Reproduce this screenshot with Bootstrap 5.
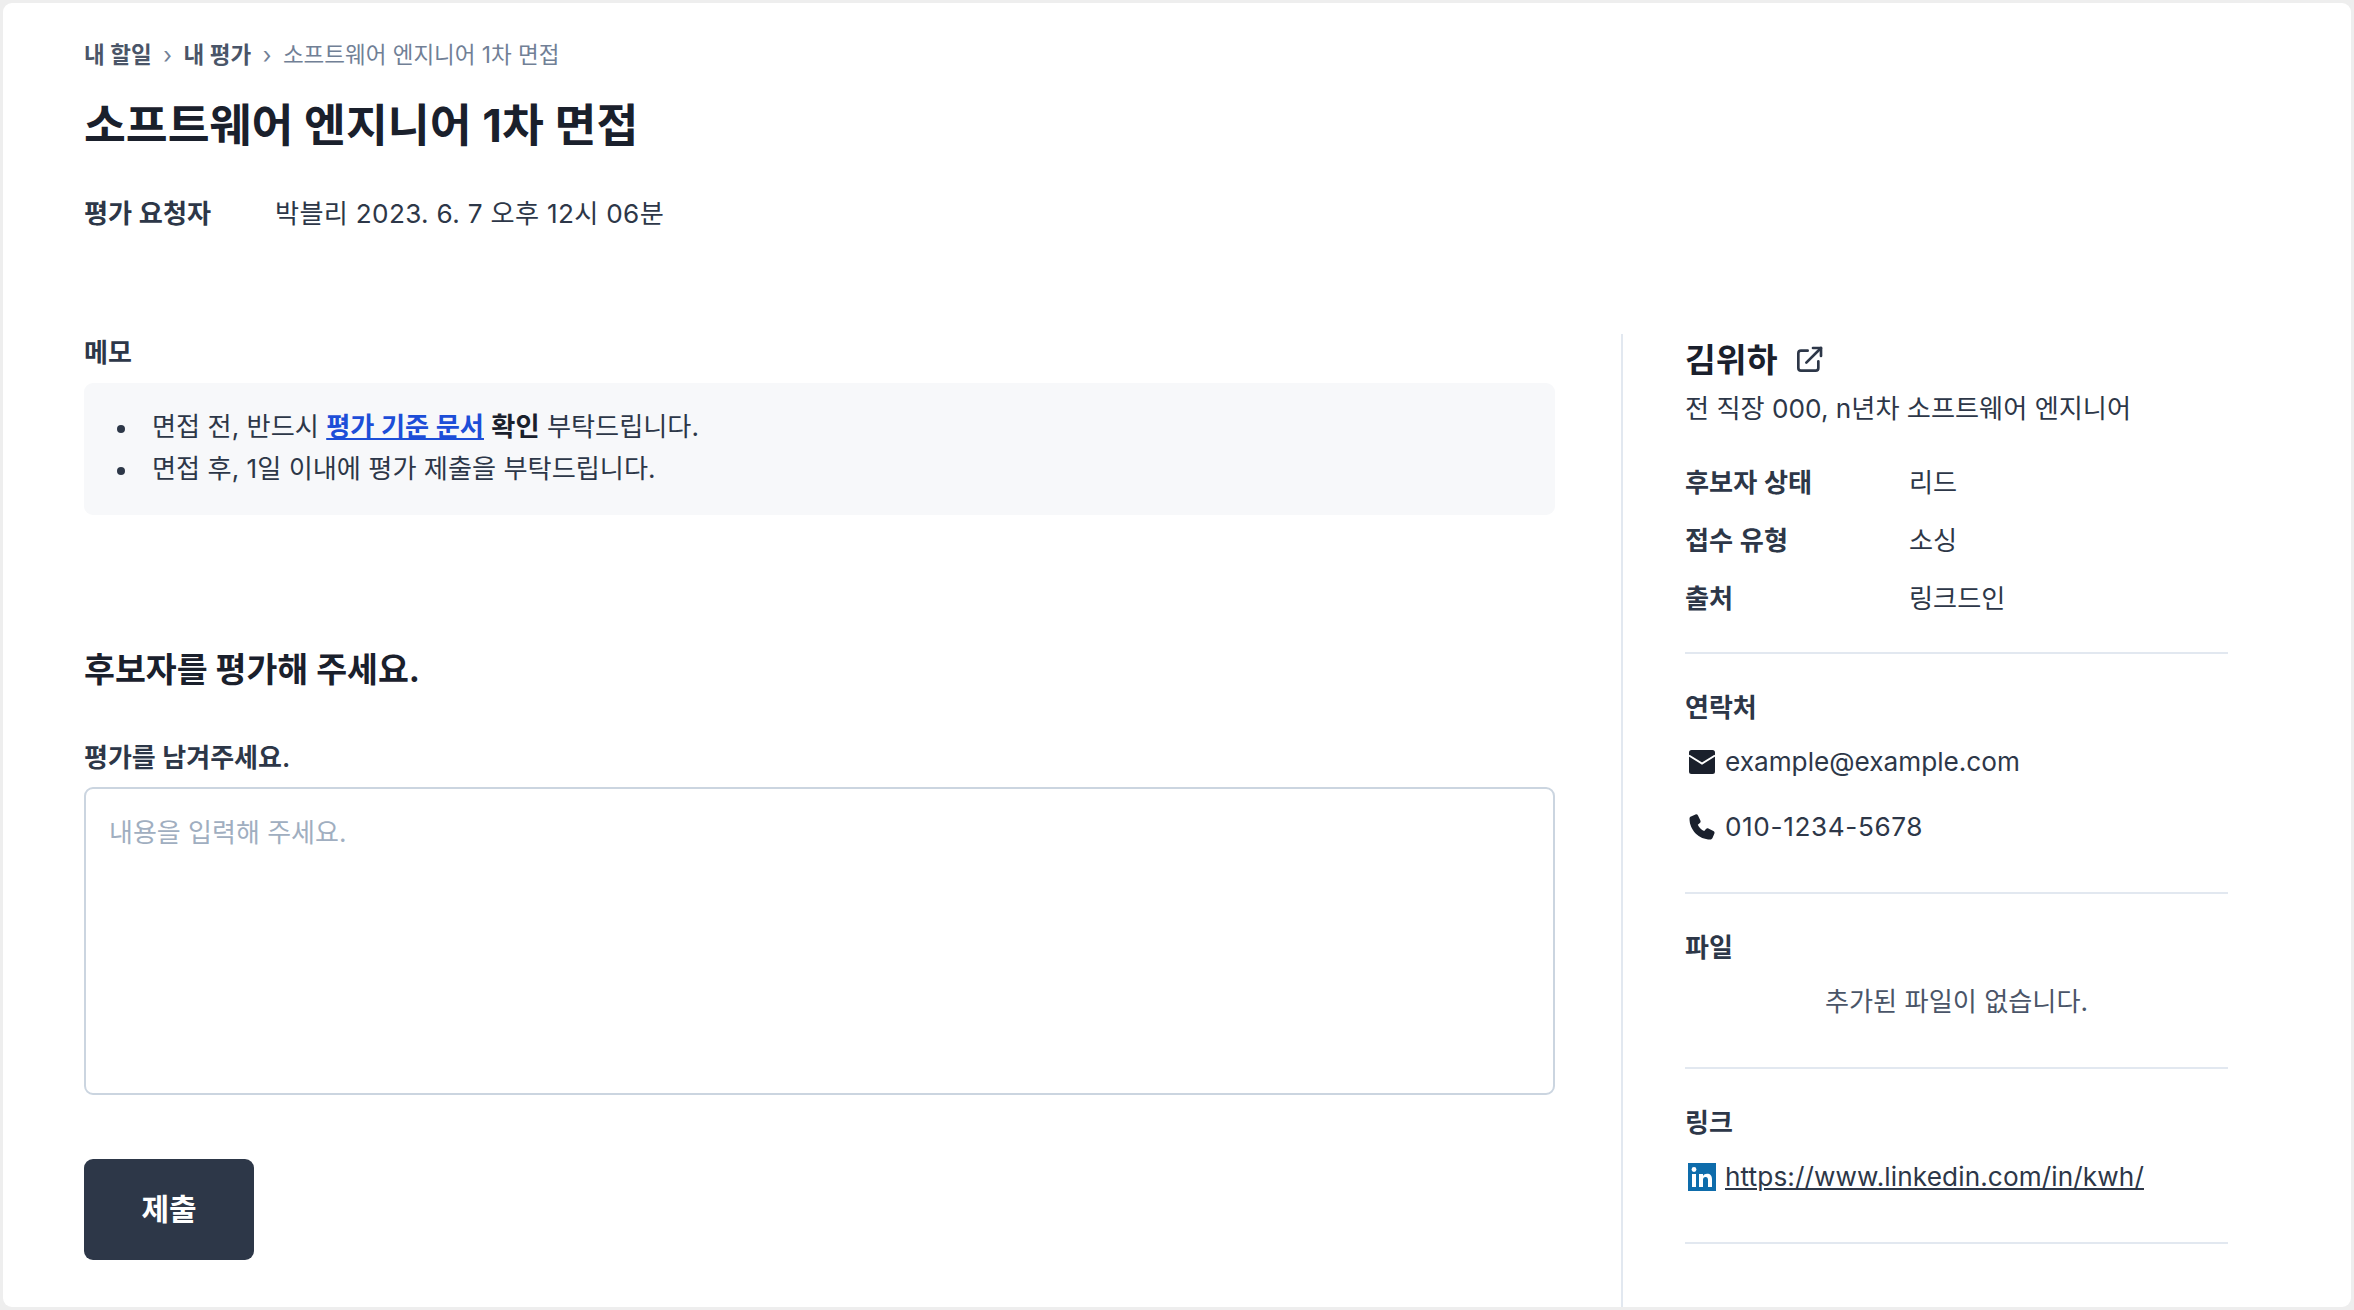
<!DOCTYPE html>
<html lang="ko">
<head>
    <meta charset="UTF-8">
    <meta name="viewport" content="width=device-width, initial-scale=1.0">
    <title>평가</title>
    <link href="https://cdn.jsdelivr.net/npm/bootstrap@5.3.0/dist/css/bootstrap.min.css" rel="stylesheet">
    <style>
        html, body { height: 100%; }
        body { background: #eeeeee; padding: 3px; font-family: Inter, "Noto Sans CJK KR", sans-serif; font-size: 26.2px; color: #2d3748; overflow: hidden; }
        .panel { height: 100%; background: #fff; border-radius: 9px; padding: 36px 0 0 81px; overflow: hidden; }
        .wide-digits { letter-spacing: .3px; }

        .crumbs { --bs-breadcrumb-divider: '›'; --bs-breadcrumb-margin-bottom: 0; --bs-breadcrumb-item-padding-x: 11.5px; --bs-breadcrumb-divider-color: #718096; font-size: 22.5px; line-height: 32px; }
        .crumbs a { color: #4a5568; font-weight: 600; text-decoration: none; }
        .crumbs .active { color: #718096; }
        .page-title { font-size: 45.5px; font-weight: 700; line-height: 56px; margin: 27px 0 42px; color: #1a202c; }
        .meta-row { line-height: 36px; margin-bottom: 102px; }
        .meta-label { width: 191px; font-weight: 600; white-space: nowrap; }

        .left-col { width: 1471px; padding-top: 3px; }
        .field-label { font-size: 26px; font-weight: 600; line-height: 32px; margin: 0 0 14px; color: #2d3748; }
        .field-label.input-label { margin-bottom: 13px; }
        .memo-box { background: #f7f8fa; border-radius: 9px; padding: 23px 0 25px 33px; margin-bottom: 133px; line-height: 42px; }
        .memo-box ul { margin: 0; padding: 0; list-style: none; }
        .memo-box li::before { content: ""; display: inline-block; width: 8px; height: 8px; border-radius: 50%; background: #2d3748; margin-right: 27px; vertical-align: middle; }
        .memo-box a { color: #1d4ed8; font-weight: 600; }
        .memo-box strong { font-weight: 700; color: #1a202c; }
        .section-title { font-size: 33.6px; font-weight: 700; line-height: 44px; margin: 0 0 50px; color: #1a202c; }
        .review-input { height: 308px; border: 2px solid #cbd5e0; border-radius: 9px; padding: 26px 23px; font-size: 26px; line-height: 36px; resize: none; margin-bottom: 64px; }
        .review-input::placeholder { color: #a0aec0; }
        .submit-btn { width: 170px; height: 101px; background: #2d3748; color: #fff; font-size: 30px; font-weight: 600; border: 0; border-radius: 9px; }

        .right-col { margin-left: 66px; padding: 2px 123px 0 62px; border-left: 2px solid #e2e8f0; flex: 1; height: 975px; }
        .person-name { font-size: 33.5px; font-weight: 600; line-height: 48px; margin: 0 0 7px; color: #1a202c; }
        .person-sub { line-height: 36px; margin-bottom: 38px; }
        .info-row { line-height: 36px; margin-bottom: 22px; }
        .info-key { width: 224px; font-weight: 600; }
        .side-section { padding-bottom: 47px; margin-bottom: 38px; border-bottom: 2px solid #e2e8f0; }
        .side-section.info-list { padding-bottom: 35px; }
        .side-section .info-row:last-child { margin-bottom: 0; }
        .side-section .field-label { margin-bottom: 20px; }
        .contact-row { line-height: 36px; margin-bottom: 29px; gap: 9px; }
        .contact-row:last-child { margin-bottom: 0; }
        .contact-row svg { flex: none; margin-left: 3px; }
        .contact-row a { color: #2d3748; letter-spacing: .1px; }
        .phone-digits { letter-spacing: .6px; }
        .empty-note { line-height: 36px; color: #4a5568; }
    </style>
</head>
<body>
    <div class="panel">
        <!-- Header -->
        <nav aria-label="breadcrumb">
            <ol class="breadcrumb crumbs">
                <li class="breadcrumb-item"><a href="#">내 할일</a></li>
                <li class="breadcrumb-item"><a href="#">내 평가</a></li>
                <li class="breadcrumb-item active" aria-current="page">소프트웨어 엔지니어 1차 면접</li>
            </ol>
        </nav>
        <h1 class="page-title">소프트웨어 엔지니어 1차 면접</h1>
        <div class="d-flex meta-row">
            <div class="meta-label">평가 요청자</div>
            <div class="wide-digits">박블리 2023. 6. 7 오후 12시 06분</div>
        </div>

        <div class="d-flex">
            <!-- Review form -->
            <div class="left-col">
                <h6 class="field-label">메모</h6>
                <div class="memo-box">
                    <ul>
                        <li>면접 전, 반드시 <a href="#">평가 기준 문서</a> <strong>확인</strong> 부탁드립니다.</li>
                        <li>면접 후, 1일 이내에 평가 제출을 부탁드립니다.</li>
                    </ul>
                </div>
                <h2 class="section-title">후보자를 평가해 주세요.</h2>
                <form>
                    <label class="field-label input-label d-block" for="review">평가를 남겨주세요.</label>
                    <textarea id="review" class="form-control review-input" placeholder="내용을 입력해 주세요."></textarea>
                    <button type="button" class="btn submit-btn">제출</button>
                </form>
            </div>

            <!-- Candidate -->
            <div class="right-col">
                <div class="d-flex align-items-center gap-3 person-name">
                    <span>김위하</span>
                    <svg width="32" height="32" viewBox="0 0 24 24" fill="none" stroke="#2d3748" stroke-width="2" stroke-linecap="round" stroke-linejoin="round"><path d="M11 5H6a2 2 0 0 0-2 2v11a2 2 0 0 0 2 2h11a2 2 0 0 0 2-2v-5"/><path d="M10 14 21 3"/><path d="M15 3h6v6"/></svg>
                </div>
                <div class="person-sub">전 직장 000, n년차 소프트웨어 엔지니어</div>
                <div class="side-section info-list">
                    <div class="d-flex info-row"><div class="info-key">후보자 상태</div><div>리드</div></div>
                    <div class="d-flex info-row"><div class="info-key">접수 유형</div><div>소싱</div></div>
                    <div class="d-flex info-row"><div class="info-key">출처</div><div>링크드인</div></div>
                </div>
                <div class="side-section">
                    <h6 class="field-label">연락처</h6>
                    <div class="d-flex align-items-center contact-row">
                        <svg width="28" height="28" viewBox="0 0 28 28"><path fill="#1a202c" d="M3.500 2h21A2.500 2.500 0 0 1 27 4.500v19a2.500 2.500 0 0 1-2.500 2.500h-21A2.500 2.500 0 0 1 1 23.500v-19A2.500 2.500 0 0 1 3.500 2z"/><path fill="none" stroke="#fff" stroke-width="2" d="M1 7.500 14 15.500l13-8"/></svg>
                        <span>example@example.com</span>
                    </div>
                    <div class="d-flex align-items-center contact-row">
                        <svg width="28" height="28" viewBox="0 0 28 28"><path fill="#1a202c" d="M3 3.500 7.500 1.500c1-.4 2 0 2.500 1l2.400 5c.4.900.2 1.800-.5 2.400L9.800 11.700c1.300 2.800 3.600 5.100 6.400 6.400l1.800-2.100c.6-.7 1.500-.9 2.400-.5l5 2.400c1 .5 1.400 1.500 1 2.500L24.500 25c-.4.900-1.200 1.500-2.200 1.500C11 26.500 1.500 17 1.500 5.700c0-1 .6-1.800 1.500-2.200z"/></svg>
                        <span class="phone-digits">010-1234-5678</span>
                    </div>
                </div>
                <div class="side-section">
                    <h6 class="field-label">파일</h6>
                    <div class="text-center empty-note">추가된 파일이 없습니다.</div>
                </div>
                <div class="side-section">
                    <h6 class="field-label">링크</h6>
                    <div class="d-flex align-items-center contact-row">
                        <svg width="28" height="28" viewBox="0 0 28 28"><rect width="28" height="28" fill="#0e6cab"/><rect x="4" y="11" width="4" height="13" fill="#fff"/><circle cx="6" cy="6.500" r="2.400" fill="#fff"/><path fill="#fff" d="M11 11h4v2c.8-1.400 2.200-2.300 4-2.300 3.400 0 5 2 5 5.600V24h-4v-7c0-2-.7-3-2.400-3-1.800 0-2.600 1.200-2.600 3.100V24h-4z"/></svg>
                        <a href="#">https://www.linkedin.com/in/kwh/</a>
                    </div>
                </div>
            </div>
        </div>
    </div>
    <script src="https://cdn.jsdelivr.net/npm/bootstrap@5.3.0/dist/js/bootstrap.bundle.min.js"></script>
</body>
</html>
